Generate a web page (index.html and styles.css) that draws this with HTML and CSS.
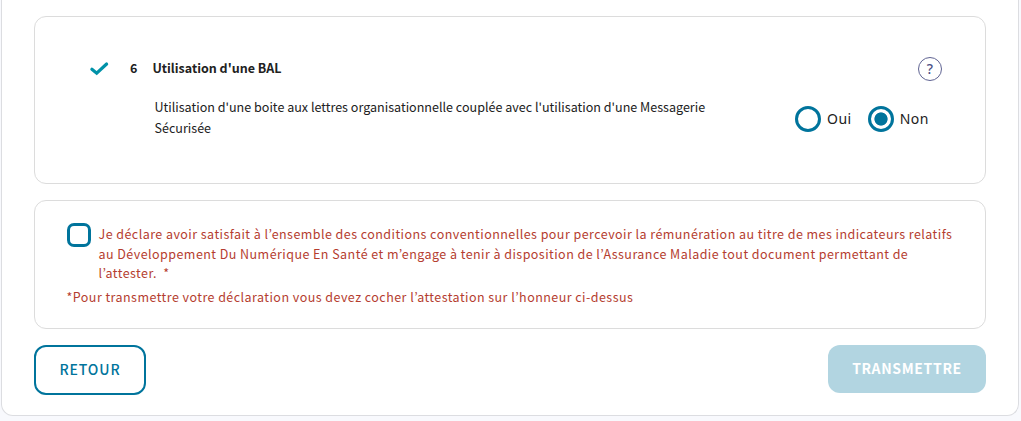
FILE: index.html
```html
<!DOCTYPE html>
<html lang="fr">
<head>
    <meta charset="UTF-8">
    <meta name="viewport" content="width=device-width, initial-scale=1.0">
    <title>Déclaration des indicateurs</title>
    <link rel="stylesheet" href="styles.css">
</head>
<body>
    <main class="panel">
        <section class="card indicator">
            <div class="indicator-header">
                <svg class="check" width="20" height="16" viewBox="0 0 20 16">
                    <path d="M2.9 8.2 7.7 12.2 17.6 3" fill="none" stroke="#0092a8" stroke-width="3.2" stroke-linecap="round"/>
                </svg>
                <span class="number">6</span>
                <h2 class="title">Utilisation d'une BAL</h2>
                <button class="help" type="button">?</button>
            </div>
            <div class="indicator-body">
                <p class="description">Utilisation d'une boite aux lettres organisationnelle couplée avec l'utilisation d'une Messagerie<br>Sécurisée</p>
                <div class="choices">
                    <label class="choice"><input class="radio" type="radio" name="bal"><span class="choice-text">Oui</span></label>
                    <label class="choice"><input class="radio" type="radio" name="bal" checked><span class="choice-text">Non</span></label>
                </div>
            </div>
        </section>

        <section class="card attestation">
            <label class="attestation-label">
                <input class="checkbox" type="checkbox">
                <span class="attestation-text">Je déclare avoir satisfait à l’ensemble des conditions conventionnelles pour percevoir la rémunération au titre de mes indicateurs relatifs<br>au Développement Du Numérique En Santé et m’engage à tenir à disposition de l’Assurance Maladie tout document permettant de<br>l’attester. &nbsp;*</span>
            </label>
            <p class="attestation-note">*Pour transmettre votre déclaration vous devez cocher l’attestation sur l’honneur ci-dessus</p>
        </section>

        <div class="actions">
            <button class="btn btn-outline" type="button">RETOUR</button>
            <button class="btn btn-primary" type="button" disabled>TRANSMETTRE</button>
        </div>
    </main>
</body>
</html>
```
FILE: styles.css
```css
* {
    box-sizing: border-box;
}
body {
    margin: 0;
    height: 421px;
    overflow: hidden;
    background: #f8f9fd;
    color: #212121;
    font-family: "Noto Sans CJK KR", "Noto Sans", sans-serif;
    font-size: 12.5px;
}
h2, p {
    margin: 0;
}
button {
    font-family: inherit;
    padding: 0;
}
.panel {
    width: 1018px;
    height: 416px;
    margin-left: 1px;
    padding: 16px 32px 0;
    background: #fff;
    border: 1px solid #dcdde1;
    border-top: 0;
    border-radius: 0 0 12px 12px;
}
.card {
    border: 1px solid #dcdcdc;
    border-radius: 12px;
}
.indicator {
    height: 168px;
    padding: 40px 43px 0 54px;
}
.indicator-header {
    display: flex;
    align-items: center;
    height: 24px;
}
.check {
    display: block;
}
.number {
    width: 22.4px;
    margin-left: 21px;
    padding-bottom: 4px;
    font-weight: 700;
}
.title {
    padding-bottom: 4px;
    font-size: 12.5px;
    font-weight: 700;
}
.help {
    width: 24px;
    height: 24px;
    margin-left: auto;
    background: #fff;
    border: 1px solid #5f6392;
    border-radius: 50%;
    color: #4c4f85;
    font-family: "Noto Sans", sans-serif;
    font-size: 14px;
    font-weight: 500;
    line-height: 20px;
}
.indicator-body {
    display: flex;
    justify-content: space-between;
    padding: 15px 13px 0 65.5px;
}
.description {
    font-size: 12.55px;
    line-height: 21px;
    white-space: nowrap;
}
.choices {
    display: flex;
    gap: 16px;
    padding-top: 10px;
}
.choice {
    display: flex;
    align-items: center;
    gap: 6px;
    height: 26px;
    font-family: "Noto Sans", sans-serif;
    font-size: 14px;
    letter-spacing: 0.5px;
}
.choice-text {
    padding-bottom: 2px;
}
.radio {
    appearance: none;
    width: 26px;
    height: 26px;
    margin: 0;
    border: 3px solid #00749c;
    border-radius: 50%;
}
.radio:checked {
    background: radial-gradient(circle, #00749c 6.2px, #fff 7px);
}
.attestation {
    height: 129px;
    margin-top: 16px;
    padding: 22px 32px 0;
    color: #b53d2f;
    letter-spacing: 0.45px;
}
.attestation-label {
    display: flex;
    gap: 7.5px;
}
.checkbox {
    appearance: none;
    flex: none;
    width: 24px;
    height: 24px;
    margin: 0;
    border: 3px solid #00749c;
    border-radius: 7px;
}
.attestation-text {
    padding-top: 1px;
    line-height: 19.5px;
    white-space: nowrap;
}
.attestation-note {
    margin: 4px 0 0 -0.5px;
    line-height: 20px;
    white-space: nowrap;
}
.actions {
    display: flex;
    justify-content: space-between;
    align-items: flex-start;
    margin-top: 16px;
}
.btn {
    padding-bottom: 2px;
    border-radius: 12px;
    font-size: 14px;
    font-weight: 700;
    letter-spacing: 0.65px;
}
.btn-outline {
    width: 112px;
    height: 50px;
    background: #fff;
    border: 2px solid #00749c;
    color: #00749c;
    font-weight: 500;
    letter-spacing: 0.9px;
}
.btn-primary {
    width: 158px;
    height: 48px;
    background: #b2d5e1;
    border: 0;
    color: #fff;
}
```
